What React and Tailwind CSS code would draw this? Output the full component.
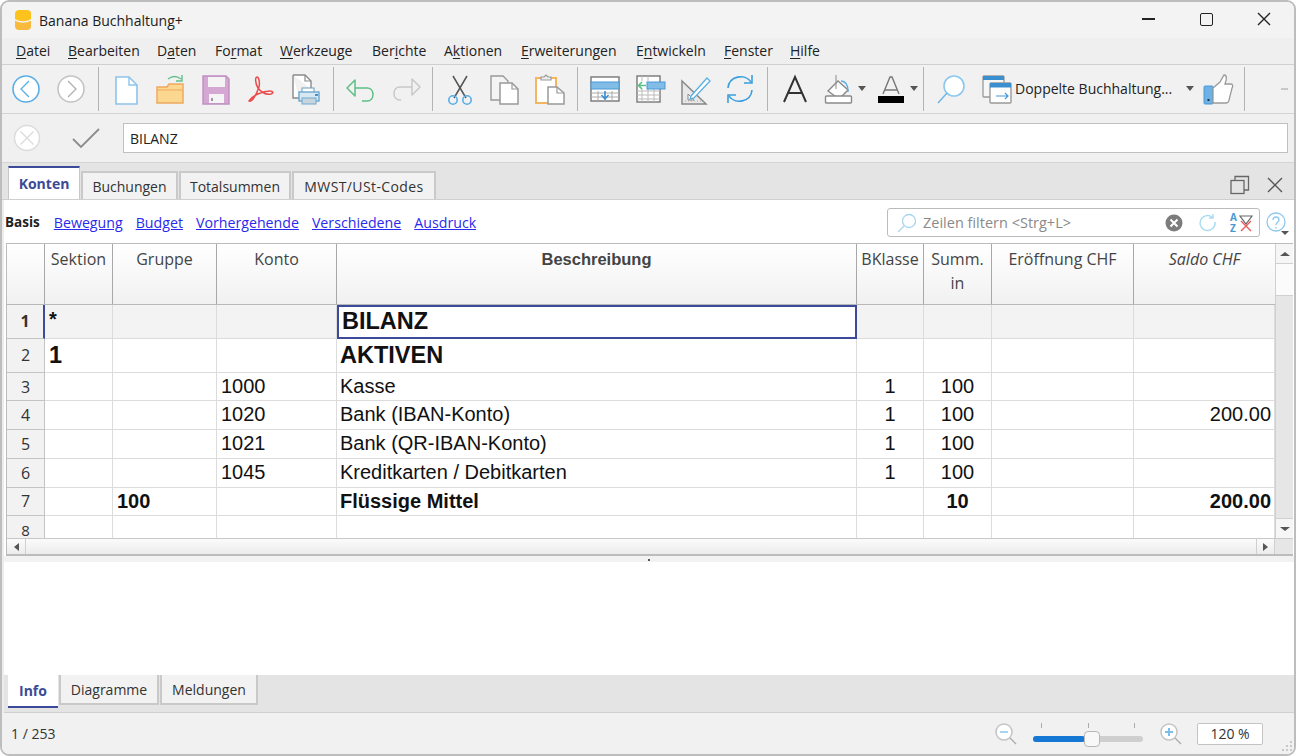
import React from 'react';

const uiFont = "font-['Open_Sans','Noto_Sans',sans-serif]";

function Svg({ w = 32, h = 32, children }) {
  return (
    <svg width={w} height={h} viewBox={`0 0 ${w} ${h}`} fill="none" className="shrink-0">
      {children}
    </svg>
  );
}

// Toolbar icons, drawn on a 32x32 box
const icons = {
  back: (
    <Svg><circle cx="16" cy="16" r="13" fill="#fff" stroke="#5aaee6" strokeWidth="1.6" /><path d="M19 8l-8 8 8 8" stroke="#5aaee6" strokeWidth="1.3" /></Svg>
  ),
  forward: (
    <Svg><circle cx="16" cy="16" r="13" fill="#fff" stroke="#c4c4c4" strokeWidth="1.6" /><path d="M13 8l8 8-8 8" stroke="#b0b0b0" strokeWidth="1.3" /></Svg>
  ),
  file: (
    <Svg><path d="M6 4h13l8 8v19H6z" fill="#fff" stroke="#8cc4ea" strokeWidth="1.6" /><path d="M19 4v8h8" stroke="#8cc4ea" strokeWidth="1.4" /></Svg>
  ),
  open: (
    <Svg><path d="M2 14h10l2-3h14v19H2z" fill="#fbd78f" stroke="#f0a860" strokeWidth="1.5" /><path d="M2 17h26" stroke="#f0a860" strokeWidth="1.2" /><path d="M13 6c4-3 9-3 13 0M27 2v6h-6" stroke="#62c08a" strokeWidth="1.4" /></Svg>
  ),
  save: (
    <Svg><path d="M3 3h23l3 3v25H3z" fill="#d5a8d4" stroke="#c08ec0" strokeWidth="1.4" /><rect x="8" y="4" width="17" height="10" fill="#f4f4f4" /><rect x="9" y="21" width="15" height="9" fill="#f4f4f4" /><rect x="11" y="25" width="2" height="3" fill="#999" /></Svg>
  ),
  pdf: (
    <Svg><path d="M4 28c3 2 8-8 10-14 1-4 0-10-2-10s-2 6 1 11c3 4 8 7 13 6 3-1 2-3-1-3-7 0-17 4-21 10z" stroke="#ea4b4b" strokeWidth="1.5" /></Svg>
  ),
  print: (
    <Svg><path d="M3 2h12l6 6v8M3 2v23h6" stroke="#8a8a8a" strokeWidth="1.4" fill="#fff" /><path d="M15 2v6h6" stroke="#8a8a8a" strokeWidth="1.2" /><rect x="12" y="15" width="12" height="5" fill="#fff" stroke="#6a9cc0" /><rect x="9" y="19" width="20" height="9" fill="#d8e8f2" stroke="#6aa8d0" strokeWidth="1.4" /><rect x="12" y="25" width="14" height="6" fill="#c9d5dc" stroke="#6aa8d0" /><rect x="25" y="21" width="3" height="2" fill="#4a90c8" /></Svg>
  ),
  undo: (
    <Svg><path d="M2 15l8-8v16zM10 15h12c8 0 8 13 0 13h-5" stroke="#5cbf85" strokeWidth="1.5" strokeLinejoin="round" /></Svg>
  ),
  redo: (
    <Svg><path d="M30 14l-8-8v16zM22 14H10c-8 0-8 13 0 13h1" stroke="#c8c8c8" strokeWidth="1.5" strokeLinejoin="round" /></Svg>
  ),
  cut: (
    <Svg><path d="M9 3l13 22M23 3L10 25" stroke="#555" strokeWidth="1.5" /><circle cx="9" cy="27" r="4.2" stroke="#5aaee6" strokeWidth="1.6" /><circle cx="23" cy="27" r="4.2" stroke="#5aaee6" strokeWidth="1.6" /></Svg>
  ),
  copy: (
    <Svg><path d="M2 3h12l5 5v19H2z" fill="#f4f4f4" stroke="#999" strokeWidth="1.4" /><path d="M11 10h12l6 6v15H11z" fill="#fff" stroke="#999" strokeWidth="1.5" /><path d="M23 10v6h6" stroke="#999" strokeWidth="1.2" /></Svg>
  ),
  paste: (
    <Svg><rect x="2" y="5" width="20" height="25" fill="#fff" stroke="#f4b460" strokeWidth="2" /><path d="M7 7V4h3l2-2 2 2h3v3z" fill="#eee" stroke="#999" strokeWidth="1.2" /><path d="M14 14h9l7 6v11H14z" fill="#fff" stroke="#999" strokeWidth="1.5" /><path d="M23 14v6h7" stroke="#999" strokeWidth="1.2" /></Svg>
  ),
  rowInsert: (
    <Svg><rect x="2" y="4" width="28" height="24" fill="#fff" stroke="#777" strokeWidth="1.4" /><path d="M2 20h28M2 24h28M9 18v10M16 18v10M23 18v10" stroke="#aaa" /><rect x="2" y="9" width="28" height="7" fill="#82bde8" stroke="#4a98d4" /><path d="M16 18v7M12.5 22l3.5 4 3.5-4" stroke="#3a90d8" strokeWidth="1.5" /></Svg>
  ),
  colInsert: (
    <Svg><rect x="3" y="3" width="23" height="26" fill="#fff" stroke="#777" strokeWidth="1.4" /><path d="M3 18h23M3 22h23M3 26h23M8 16v13M14 16v13M20 16v13M8 3v5M14 3v5" stroke="#bbb" /><rect x="13" y="9" width="18" height="7" fill="#82bde8" stroke="#4a98d4" /><path d="M12 12.5H5M8 9l-3.5 3.5L8 16" stroke="#5cbf85" strokeWidth="1.6" /></Svg>
  ),
  ruler: (
    <Svg><path d="M3 8l24 23H3z" fill="#e8e8e8" stroke="#888" strokeWidth="1.5" /><path d="M9 21l6 6H9z" fill="#fff" stroke="#888" /><path d="M3 28h24" stroke="#aaa" strokeDasharray="1 2" /><path d="M12 23l16-18 3 3-16 17-4 1z" fill="#fff" stroke="#5aaee6" strokeWidth="1.3" /></Svg>
  ),
  refresh: (
    <Svg><path d="M4 15C5 3 21 0 27 9M28 17C27 29 11 32 5 23" stroke="#3a9fe0" strokeWidth="1.6" /><path d="M28 2v8h-8M4 30v-8h8" stroke="#3a9fe0" strokeWidth="1.6" /></Svg>
  ),
  font: (
    <Svg><path d="M5 29L16 4l11 25M9 20h14" stroke="#333" strokeWidth="2" /></Svg>
  ),
  fill: (
    <Svg><path d="M5 18l10-10 10 9-9 9z" fill="#fff" stroke="#8a8a8a" strokeWidth="1.4" /><path d="M13 2v14" stroke="#8a8a8a" /><path d="M18 8c5 0 7 4 7 11" stroke="#5aaee6" strokeWidth="1.4" /><rect x="2.5" y="23" width="26" height="7" rx="1" fill="#fff" stroke="#8a8a8a" strokeWidth="1.4" /></Svg>
  ),
  textColor: (
    <Svg><path d="M8 21L15 4h2l7 17M10 17h12" stroke="#777" strokeWidth="1.4" /><rect x="3" y="23" width="26" height="7" fill="#000" /></Svg>
  ),
  search: (
    <Svg><circle cx="19" cy="13" r="10" fill="#fff" stroke="#8cc8ee" strokeWidth="1.6" /><path d="M12 20L3 30" stroke="#6eb4e6" strokeWidth="1.4" /></Svg>
  ),
  windows: (
    <Svg><rect x="2" y="3" width="21" height="21" rx="1" fill="#f6f6f6" stroke="#999" strokeWidth="1.3" /><rect x="2" y="3" width="21" height="4" fill="#3a8fd0" /><rect x="9" y="10" width="21" height="20" rx="1" fill="#fff" stroke="#999" strokeWidth="1.4" /><rect x="9" y="10" width="21" height="4.5" fill="#3a8fd0" /><path d="M15 23h12M24 20l3 3-3 3" stroke="#4a98d4" strokeWidth="1.2" /></Svg>
  ),
  thumb: (
    <Svg><rect x="1" y="13" width="9" height="18" rx="1" fill="#6cb2e6" stroke="#4a98d4" /><rect x="4.5" y="26" width="2" height="2" fill="#234" /><path d="M10 15l7-6 4-7c3 0 3 4 1 9h6c2 0 2 3 1 4l-3 12c0 2-2 3-3 3H10z" fill="#fff" stroke="#9a9a9a" strokeWidth="1.3" /></Svg>
  ),
};

function Slot({ name }) {
  return <div className="w-[45px] flex items-center justify-center">{icons[name]}</div>;
}

function Sep({ ml = 'ml-1', mr = 'mr-1' }) {
  return <div className={`w-px h-[44px] bg-[#b4b4b4] ${ml} ${mr}`} />;
}

function Caret() {
  return <div className="w-0 h-0 border-x-[4.5px] border-x-transparent border-t-[5px] border-t-[#555]" />;
}

const menus = [
  { w: 'w-[52px]', pre: '', u: 'D', post: 'atei' },
  { w: 'w-[89px]', pre: '', u: 'B', post: 'earbeiten' },
  { w: 'w-[58px]', pre: 'D', u: 'a', post: 'ten' },
  { w: 'w-[65px]', pre: 'Fo', u: 'r', post: 'mat' },
  { w: 'w-[92px]', pre: '', u: 'W', post: 'erkzeuge' },
  { w: 'w-[72px]', pre: 'Ber', u: 'i', post: 'chte' },
  { w: 'w-[77px]', pre: 'A', u: 'k', post: 'tionen' },
  { w: 'w-[115px]', pre: '', u: 'E', post: 'rweiterungen' },
  { w: 'w-[88px]', pre: 'E', u: 'n', post: 'twickeln' },
  { w: 'w-[66px]', pre: '', u: 'F', post: 'enster' },
  { w: 'w-[40px]', pre: '', u: 'H', post: 'ilfe' },
];

function Tab({ active, w, children }) {
  if (active) {
    return (
      <div className={`${w} h-[33px] flex items-center justify-center bg-white border-t-2 border-t-[#3b4a9a] border-x border-x-[#c8c8c8] font-bold text-[#3d4a96] text-[14px]`}>
        {children}
      </div>
    );
  }
  return (
    <div className={`${w} h-[28px] ml-px flex items-center justify-center bg-[#f2f2f2] border-2 border-b-0 border-[#c9c9c9] text-[#333] text-[14px]`}>
      {children}
    </div>
  );
}

function BottomTab({ active, w, children }) {
  if (active) {
    return (
      <div className={`${w} h-[33px] flex items-center justify-center bg-white border-b-2 border-b-[#3b4a9a] font-bold text-[#3d4a96] text-[14px]`}>
        {children}
      </div>
    );
  }
  return (
    <div className={`${w} h-[30px] ml-px flex items-center justify-center bg-[#f2f2f2] border-2 border-t-0 border-[#c9c9c9] text-[#333] text-[14px]`}>
      {children}
    </div>
  );
}

const gridCols = 'grid grid-cols-[38px_68px_104px_120px_520px_67px_68px_142px_141px]';

const rows = [
  { n: 1, h: 'h-[34px]', sek: '*', desc: 'BILANZ', big: true, shaded: true, selected: true },
  { n: 2, h: 'h-[34px]', sek: '1', desc: 'AKTIVEN', big: true },
  { n: 3, konto: '1000', desc: 'Kasse', kl: '1', sum: '100' },
  { n: 4, konto: '1020', desc: 'Bank (IBAN-Konto)', kl: '1', sum: '100', saldo: '200.00' },
  { n: 5, konto: '1021', desc: 'Bank (QR-IBAN-Konto)', kl: '1', sum: '100' },
  { n: 6, konto: '1045', desc: 'Kreditkarten / Debitkarten', kl: '1', sum: '100' },
  { n: 7, gruppe: '100', desc: 'Flüssige Mittel', sum: '10', saldo: '200.00', bold: true },
];

function Cell({ className = '', border = 'border-r border-b border-[#dcdcdc]', children }) {
  return (
    <div className={`${border} overflow-hidden whitespace-nowrap px-[4px] ${className}`}>
      {children}
    </div>
  );
}

function Row({ r }) {
  const weight = r.bold ? 'font-bold' : '';
  const bg = r.shaded ? 'bg-[#f3f3f3]' : 'bg-white';
  const h = r.h || 'h-[29px]';
  const txt = r.big ? 'text-[23.5px] font-bold leading-[33px]' : `text-[20px] leading-[27px] ${weight}`;
  return (
    <div className={`${gridCols} ${h} text-[#111] font-['Liberation_Sans',Arial,sans-serif]`}>
      <div className={`flex items-center justify-center border-b border-[#c4c4c4] bg-[#f2f2f2] text-[#333] ${uiFont} text-[16px] ${r.selected ? 'font-bold border-r-2 border-r-[#3b4a9a]' : 'border-r'}`}>
        {r.n}
      </div>
      <Cell className={`${bg} font-bold ${r.big ? (r.n === 1 ? 'text-[20px] leading-[28px]' : 'text-[23.5px] leading-[33px]') : ''}`}>{r.sek}</Cell>
      <Cell className={`${bg} text-[20px] leading-[27px] font-bold`}>{r.gruppe}</Cell>
      <Cell className={`${bg} text-[20px] leading-[27px]`}>{r.konto}</Cell>
      {r.selected ? (
        <Cell border="border-2 border-[#3b4a9a]" className={`${txt} bg-white !pl-[3px] !leading-[28px]`}>{r.desc}</Cell>
      ) : (
        <Cell className={`${txt} ${bg} !pl-[3px]`}>{r.desc}</Cell>
      )}
      <Cell className={`${bg} text-[20px] leading-[27px] text-center`}>{r.kl}</Cell>
      <Cell className={`${bg} text-[20px] leading-[27px] text-center ${weight}`}>{r.sum}</Cell>
      <Cell className={bg} />
      <Cell className={`${bg} text-[20px] leading-[27px] text-right !pr-[3px] ${weight}`}>{r.saldo}</Cell>
    </div>
  );
}

function Head({ className = '', children }) {
  return (
    <div className={`border-r border-[#a8a8a8] pt-[3px] text-center leading-6 text-[#444] text-[16px] whitespace-nowrap ${className}`}>
      {children}
    </div>
  );
}

export default function App() {
  return (
    <div className={`w-[1296px] h-[756px] overflow-hidden bg-white ${uiFont}`}>
      <div className="w-full h-full flex flex-col bg-[#f0f0f0] border-2 border-[#bdbdbd] rounded-[9px] overflow-hidden text-[#222]">
        {/* Title bar */}
        <div className="h-[36px] shrink-0 flex items-center bg-[#f3f3f3]">
          <svg width="16" height="20" viewBox="0 0 16 20" className="ml-[13px] mr-[8px]">
            <path d="M0 4c0-3 2-4 4-4h8c2 0 4 1 4 3v6C11 12 5 12 0 9z" fill="#fdc21c" />
            <path d="M0 10.5c5 3 11 3 16 0V16c0 3-2 4-4 4H4c-2 0-4-1-4-4z" fill="#f9b93a" />
          </svg>
          <span className="text-[14px] text-[#1c1c1c]">Banana Buchhaltung+</span>
          <div className="flex-1" />
          <div className="flex items-center mb-[2px]">
            <div className="w-[58px] flex justify-center"><div className="w-[13px] h-[2px] bg-[#222]" /></div>
            <div className="w-[58px] flex justify-center"><div className="w-[13px] h-[13px] rounded-[2px] border-[1.5px] border-[#222]" /></div>
            <div className="w-[58px] flex justify-center mr-[1px]">
              <svg width="14" height="14" viewBox="0 0 14 14"><path d="M1 1l12 12M13 1L1 13" stroke="#222" strokeWidth="1.4" /></svg>
            </div>
          </div>
        </div>

        {/* Menu */}
        <div className="h-[27px] shrink-0 flex items-center pl-[14px] pb-[2px] bg-[#efefef] border-b border-[#d0d0d0] text-[14px] text-[#222]">
          {menus.map((m) => (
            <span key={m.u + m.post} className={`${m.w} shrink-0 whitespace-nowrap`}>
              {m.pre}<span className="underline underline-offset-2">{m.u}</span>{m.post}
            </span>
          ))}
        </div>

        {/* Toolbar */}
        <div className="h-[49px] shrink-0 flex items-center pl-[1px] pb-[1px] bg-[#f1f1f1] border-b border-[#d4d4d4]">
          <Slot name="back" />
          <Slot name="forward" />
          <Sep ml="ml-[5px]" />
          <Slot name="file" />
          <Slot name="open" />
          <Slot name="save" />
          <Slot name="pdf" />
          <Slot name="print" />
          <Sep ml="ml-[5px]" />
          <Slot name="undo" />
          <Slot name="redo" />
          <Sep />
          <Slot name="cut" />
          <Slot name="copy" />
          <Slot name="paste" />
          <Sep ml="ml-[5px]" />
          <Slot name="rowInsert" />
          <Slot name="colInsert" />
          <Slot name="ruler" />
          <Slot name="refresh" />
          <Sep ml="ml-[5px]" />
          <Slot name="font" />
          <div className="w-[52px] flex items-center gap-[3px] pl-[6px]">{icons.fill}<Caret /></div>
          <div className="w-[52px] flex items-center gap-[3px] pl-[6px]">{icons.textColor}<Caret /></div>
          <Sep ml="ml-[2px]" />
          <Slot name="search" />
          <div className="ml-[8px] flex items-center">
            {icons.windows}
            <span className="ml-[2px] w-[171px] text-[14px] text-[#222] whitespace-nowrap">Doppelte Buchhaltung...</span>
            <Caret />
            <div className="ml-[9px]">{icons.thumb}</div>
          </div>
          <Sep ml="ml-[9px]" />
          <div className="ml-[32px] w-[7px] h-[2px] bg-[#c8c8c8]" />
        </div>

        {/* Formula bar */}
        <div className="h-[49px] shrink-0 flex items-center pl-[11px] pr-[6px] bg-[#f0f0f0] border-b border-[#d4d4d4]">
          <svg width="28" height="28" viewBox="0 0 28 28">
            <circle cx="14" cy="14" r="12.5" fill="#fff" stroke="#dcdcdc" strokeWidth="1.5" />
            <path d="M7.5 7.5l13 13M20.5 7.5l-13 13" stroke="#dcdcdc" strokeWidth="1.4" />
          </svg>
          <svg width="30" height="24" viewBox="0 0 30 24" fill="none" className="ml-[30px]">
            <path d="M2 13l8 8L28 3" stroke="#8c8c8c" strokeWidth="1.8" />
          </svg>
          <div className="ml-[22px] flex-1 h-[30px] flex items-center px-[6px] bg-white border border-[#c0c0c0] text-[14px] text-[#222]">
            BILANZ
          </div>
        </div>

        {/* Tab bar */}
        <div className="h-[37px] shrink-0 flex items-end pl-[6px] pr-[11px] bg-[#e4e4e4] border-b border-[#cfcfcf]">
          <Tab active w="w-[72px]">Konten</Tab>
          <Tab w="w-[97px]">Buchungen</Tab>
          <Tab w="w-[112px]">Totalsummen</Tab>
          <Tab w="w-[144px]"><span className="tracking-[0.4px]">MWST/USt-Codes</span></Tab>
          <div className="flex-1" />
          <div className="flex items-center gap-[17px] self-center mt-[7px]">
            <svg width="20" height="20" viewBox="0 0 20 20"><rect x="1" y="5.5" width="13" height="13" fill="none" stroke="#666" strokeWidth="1.3" /><path d="M5 5V1.5h13.5V15H14" fill="none" stroke="#666" strokeWidth="1.3" /></svg>
            <svg width="16" height="16" viewBox="0 0 16 16"><path d="M1 1l14 14M15 1L1 15" stroke="#555" strokeWidth="1.3" /></svg>
          </div>
        </div>

        {/* Main panel */}
        <div className="flex-1 min-h-0 flex flex-col bg-white border-l-2 border-[#ececec]">
          {/* View links and filter */}
          <div className="h-[43px] shrink-0 flex items-center pl-[1px] pr-[5px] pt-[2px] text-[13.5px]">
            <span className="font-bold text-[#222] mr-[14px]">Basis</span>
            <div className="flex gap-[13px] text-[14.2px] text-[#2a2aee] underline">
              <span>Bewegung</span>
              <span>Budget</span>
              <span>Vorhergehende</span>
              <span>Verschiedene</span>
              <span>Ausdruck</span>
            </div>
            <div className="flex-1" />
            <div className="w-[373px] h-[29px] flex items-center pl-[9px] pr-[7px] border border-[#bcbcbc] rounded-[3px] bg-white">
              <svg width="20" height="20" viewBox="0 0 20 20"><circle cx="12" cy="8" r="6.5" fill="none" stroke="#a8d4f0" strokeWidth="1.3" /><path d="M7 13L1 19" stroke="#a8d4f0" strokeWidth="1.2" /></svg>
              <span className="ml-[6px] text-[#8a8a8a] text-[14.5px]">Zeilen filtern &lt;Strg+L&gt;</span>
              <div className="flex-1" />
              <svg width="18" height="18" viewBox="0 0 18 18"><circle cx="9" cy="9" r="8.5" fill="#7c7c7c" /><path d="M5.5 5.5l7 7M12.5 5.5l-7 7" stroke="#fff" strokeWidth="2" /></svg>
              <svg width="20" height="20" viewBox="0 0 20 20" className="ml-[15px]"><path d="M17 9a7.5 7.5 0 1 1-3-5M15 1v4h-4" fill="none" stroke="#a8dcf0" strokeWidth="1.4" /></svg>
              <div className="ml-[12px] relative w-[22px] h-[22px]">
                <span className="absolute left-0 top-0 text-[10px] leading-[10px] font-bold text-[#4a98d4]">A</span>
                <span className="absolute left-0 top-[11px] text-[10px] leading-[10px] font-bold text-[#4a98d4]">Z</span>
                <svg width="14" height="18" viewBox="0 0 14 18" className="absolute left-[9px] top-[2px]"><path d="M1 2h12L7 10z" fill="none" stroke="#666" strokeWidth="1.2" /><path d="M2 7l10 10M12 7L2 17" stroke="#ea5a5a" strokeWidth="1.4" /></svg>
              </div>
            </div>
            <div className="relative ml-[5px] w-[24px] h-[24px] flex items-center justify-center">
              <svg width="22" height="22" viewBox="0 0 22 22"><circle cx="10" cy="10" r="9" fill="#fff" stroke="#8cc8ee" strokeWidth="1.3" /><path d="M7 8c0-4 6-4 6 0 0 2-3 2-3 5M10 15v1.5" fill="none" stroke="#8cc8ee" strokeWidth="1.3" /></svg>
              <div className="absolute right-0 bottom-0 w-0 h-0 border-x-[4px] border-x-transparent border-t-[4px] border-t-[#555]" />
            </div>
          </div>

          {/* Table */}
          <div className="h-[313px] shrink-0 ml-[2px] mr-[1px] flex flex-col border-y border-l border-[#bcbcbc] border-b-2">
            <div className="flex-1 min-h-0 flex">
              <div className="w-[1268px] overflow-hidden flex flex-col">
                <div className={`${gridCols} h-[61px] shrink-0 bg-gradient-to-b from-white to-[#f1f1f1] border-b border-[#b8b8b8]`}>
                  <Head />
                  <Head>Sektion</Head>
                  <Head>Gruppe</Head>
                  <Head>Konto</Head>
                  <Head className="font-['Liberation_Sans',Arial,sans-serif] font-bold text-[#333] !text-[16.5px]">Beschreibung</Head>
                  <Head>BKlasse</Head>
                  <Head>Summ.<br />in</Head>
                  <Head>Eröffnung CHF</Head>
                  <Head className="italic border-r-0">Saldo CHF</Head>
                </div>
                {rows.map((r) => <Row key={r.n} r={r} />)}
                <div className={`${gridCols} h-[22px] overflow-hidden`}>
                  <div className={`flex justify-center border-r border-[#c4c4c4] bg-[#f2f2f2] text-[15px] leading-[21px] pt-[4px] text-[#333]`}>8</div>
                  {[0, 1, 2, 3, 4, 5, 6, 7].map((i) => <div key={i} className="border-r border-[#dcdcdc]" />)}
                </div>
              </div>
              {/* Vertical scrollbar */}
              <div className="w-[18px] shrink-0 flex flex-col bg-[#e6e6e6] border-l border-[#d0d0d0]">
                <div className="h-[20px] flex items-center justify-center bg-[#f6f6f6] border-b border-[#d0d0d0]">
                  <div className="w-0 h-0 border-x-[5px] border-x-transparent border-b-[4px] border-b-[#555]" />
                </div>
                <div className="h-[32px] bg-[#fbfbfb] border-b border-[#d0d0d0]" />
                <div className="flex-1" />
                <div className="h-[20px] flex items-center justify-center bg-[#f6f6f6] border-t border-[#d0d0d0]">
                  <div className="w-0 h-0 border-x-[5px] border-x-transparent border-t-[4px] border-t-[#555]" />
                </div>
              </div>
            </div>
            {/* Horizontal scrollbar */}
            <div className="h-[16px] shrink-0 flex items-center bg-gradient-to-b from-[#fbfbfb] to-[#ececec] border-t border-[#c8c8c8]">
              <div className="w-[19px] h-full flex items-center justify-center border-r border-[#d0d0d0]">
                <div className="w-0 h-0 border-y-[4px] border-y-transparent border-r-[5px] border-r-[#555]" />
              </div>
              <div className="flex-1" />
              <div className="w-[19px] h-full flex items-center justify-center border-x border-[#d0d0d0]">
                <div className="w-0 h-0 border-y-[4px] border-y-transparent border-l-[5px] border-l-[#555]" />
              </div>
              <div className="w-[18px] h-full bg-[#e6e6e6]" />
            </div>
          </div>

          {/* Splitter */}
          <div className="h-[6px] shrink-0 flex justify-center bg-[#f2f2f2]">
            <div className="w-[2px] h-[2px] mt-[3px] bg-[#555]" />
          </div>

          {/* Info pane */}
          <div className="flex-1 min-h-0 bg-white" />

          {/* Bottom tabs */}
          <div className="h-[38px] shrink-0 flex items-start pl-[4px] bg-[#e4e4e4] border-b border-[#d0d0d0]">
            <BottomTab active w="w-[50px]">Info</BottomTab>
            <BottomTab w="w-[100px]">Diagramme</BottomTab>
            <BottomTab w="w-[98px]">Meldungen</BottomTab>
          </div>
        </div>

        {/* Status bar */}
        <div className="h-[41px] shrink-0 flex items-center pl-[9px] bg-[#f1f1f1] text-[14px] text-[#333]">
          <span>1 / 253</span>
          <div className="flex-1" />
          <svg width="24" height="24" viewBox="0 0 24 24"><circle cx="10" cy="10" r="8" fill="#fff" stroke="#c4c4c4" strokeWidth="1.5" /><path d="M6 10h8" stroke="#a8d4f0" strokeWidth="2" /><path d="M16 16l6 6" stroke="#aaa" strokeWidth="1.3" /></svg>
          <div className="ml-[15px] w-[110px] flex flex-col justify-center pb-[2px]">
            <div className="flex justify-between px-[8px] h-[5px] mb-[8px]">
              <div className="w-px h-full bg-[#aaa]" />
              <div className="w-px h-full bg-[#aaa]" />
              <div className="w-px h-full bg-[#aaa]" />
            </div>
            <div className="relative h-[6px] rounded-full bg-[#cfcfcf]">
              <div className="w-[52px] h-full rounded-full bg-[#1478d4]" />
              <div className="absolute left-[51px] top-[-5px] w-[16px] h-[16px] rounded-[4px] bg-[#f8f8f8] border border-[#b8b8b8]" />
            </div>
          </div>
          <svg width="24" height="24" viewBox="0 0 24 24" className="ml-[16px]"><circle cx="10" cy="10" r="8" fill="#fff" stroke="#c4c4c4" strokeWidth="1.5" /><path d="M6 10h8M10 6v8" stroke="#7cbdec" strokeWidth="2" /><path d="M16 16l6 6" stroke="#aaa" strokeWidth="1.3" /></svg>
          <div className="ml-[14px] mr-[17px] w-[66px] h-[22px] flex items-center justify-center bg-white border border-[#c4c4c4] rounded-[2px] text-[14px] text-[#333]">
            120 %
          </div>
          <svg width="14" height="14" viewBox="0 0 14 14" className="self-end mb-[1px]" fill="#c8c8c8">
            <rect x="10" y="2" width="2" height="2" />
            <rect x="6" y="6" width="2" height="2" />
            <rect x="10" y="6" width="2" height="2" />
            <rect x="2" y="10" width="2" height="2" />
            <rect x="6" y="10" width="2" height="2" />
            <rect x="10" y="10" width="2" height="2" />
          </svg>
        </div>
      </div>
    </div>
  );
}
